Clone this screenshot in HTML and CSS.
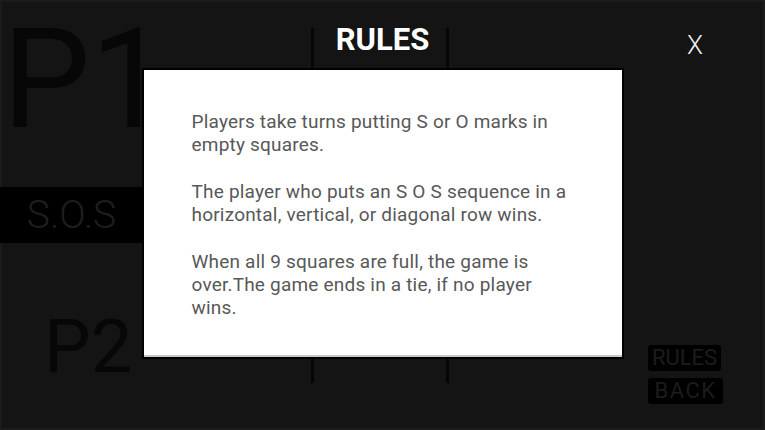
FILE: index.html
```html
<!DOCTYPE html>
<html lang="en">
<head>
    <meta charset="UTF-8">
    <meta name="viewport" content="width=device-width, initial-scale=1.0">
    <title>S.O.S</title>
    <link rel="stylesheet" href="styles.css">
</head>
<body>
    <main class="game">
        <section class="players">
            <div class="player player-one">P1</div>
            <div class="game-title">S.O.S</div>
            <div class="player player-two">P2</div>
        </section>
        <section class="board" aria-label="Board">
            <div class="cell"></div>
            <div class="cell"></div>
            <div class="cell"></div>
            <div class="cell"></div>
            <div class="cell"></div>
            <div class="cell"></div>
            <div class="cell"></div>
            <div class="cell"></div>
            <div class="cell"></div>
        </section>
        <nav class="menu">
            <button class="menu-btn" type="button">RULES</button>
            <button class="menu-btn menu-btn-back" type="button">BACK</button>
        </nav>
    </main>

    <!-- rules popup -->
    <div class="overlay" role="dialog" aria-labelledby="rules-title">
        <h1 id="rules-title" class="rules-title">RULES</h1>
        <button class="rules-close" type="button" aria-label="Close">X</button>
        <div class="rules-box">
            <p>Players take turns putting S or O marks in empty squares.</p>
            <p>The player who puts an S O S sequence in a horizontal, vertical, or diagonal row wins.</p>
            <p>When all 9 squares are full, the game is over.The game ends in a tie, if no player wins.</p>
        </div>
    </div>
</body>
</html>
```

FILE: styles.css
```css
body {
    margin: 0;
    width: 765px;
    height: 430px;
    overflow: hidden;
    position: relative;
    background-color: #141414;
    font-family: Roboto, 'Liberation Sans', sans-serif;
}
.game {
    display: flex;
    height: 430px;
    box-shadow: inset 0 0 0 2px #1b1b1b;
}
.players {
    width: 143px;
    display: flex;
    flex-direction: column;
}
.player {
    color: #070707;
    line-height: 1;
}
.player-one {
    height: 187px;
    box-sizing: border-box;
    padding: 9px 0 0 2px;
    font-size: 140px;
    white-space: nowrap;
}
.game-title {
    height: 56px;
    background: #000;
    color: #1e1e1e;
    font-size: 39px;
    font-weight: 300;
    line-height: 56px;
    text-align: center;
}
.player-two {
    margin-top: 67px;
    padding-left: 44px;
    font-size: 74px;
}
.board {
    margin: 28px 0 0 36px;
    width: 402px;
    height: 355px;
    display: grid;
    grid-template-columns: repeat(3, 1fr);
    grid-template-rows: repeat(3, 1fr);
    gap: 3px;
    background: #060606;
}
.cell {
    background: #141414;
}
.menu {
    flex-grow: 1;
    display: flex;
    flex-direction: column;
    align-items: flex-start;
    justify-content: flex-end;
    gap: 7px;
    padding: 0 0 26px 67px;
}
.menu-btn {
    font-family: inherit;
    font-size: 22px;
    line-height: 26px;
    width: 73px;
    height: 26px;
    padding: 0;
    border: none;
    border-radius: 3px;
    background: #000;
    color: #1c1c1c;
    text-align: center;
}
.menu-btn-back {
    width: 75px;
    letter-spacing: 1.5px;
}
.overlay {
    position: absolute;
    inset: 0;
    display: flex;
    flex-direction: column;
    align-items: center;
}
.rules-title {
    height: 70px;
    box-sizing: border-box;
    margin: 0;
    padding-top: 24px;
    color: #fff;
    font-size: 31px;
    font-weight: 700;
    line-height: 1;
}
.rules-close {
    position: absolute;
    top: 32px;
    right: 62px;
    padding: 0;
    border: none;
    background: none;
    color: #eee;
    font-family: inherit;
    font-size: 26px;
    font-weight: 300;
    line-height: 1;
}
.rules-box {
    width: 478px;
    height: 287px;
    box-sizing: border-box;
    padding: 40px 46px 0 48px;
    background: #fff;
    box-shadow: 0 0 0 2px #000, inset 0 -2px 0 #c8c8c8;
}
.rules-box p {
    margin: 0 0 23.25px;
    font-size: 19px;
    letter-spacing: 0.2px;
    line-height: 23.25px;
    color: #585858;
}
```
